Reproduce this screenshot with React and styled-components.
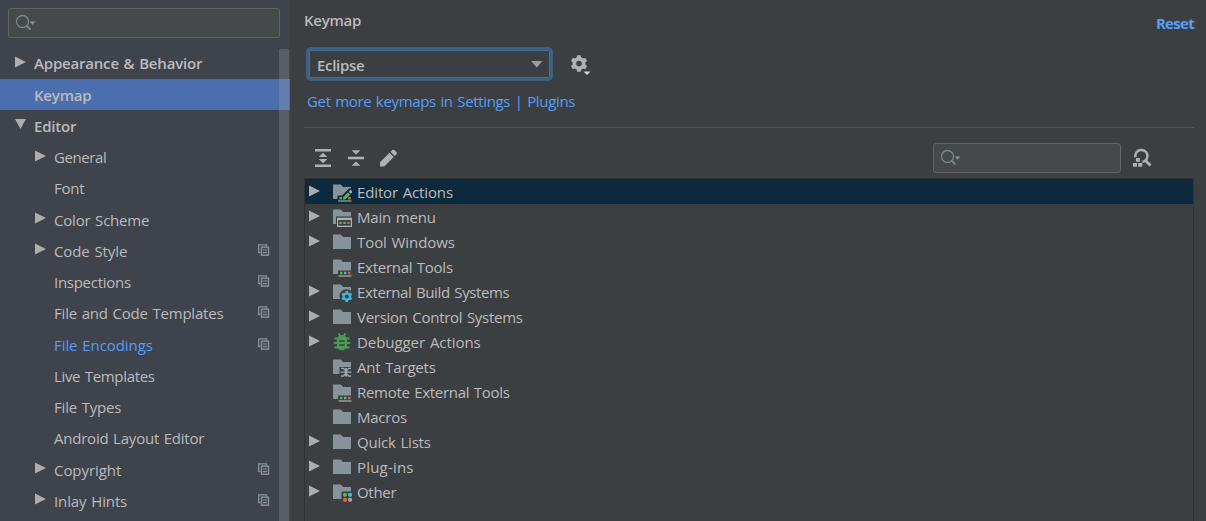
import React from 'react';
import styled, { createGlobalStyle } from 'styled-components';

const Global = createGlobalStyle`
  * { box-sizing: border-box; }
  body { margin: 0; background: #3c3f41; overflow: hidden; }
`;

const Window = styled.div`
  display: flex;
  width: 1206px;
  height: 521px;
  overflow: hidden;
  background: #3c3f41;
  color: #bbbbbb;
  font: 15px/25px "Open Sans", "Noto Sans", sans-serif;
  word-spacing: 1px;
`;

const Sidebar = styled.aside`
  position: relative;
  width: 290px;
  flex: none;
  background: #3f434c;
  padding-top: 8px;
`;

const SearchBox = styled.div`
  display: flex;
  align-items: center;
  width: ${(p) => p.$width}px;
  height: 30px;
  padding-left: 6px;
  border: 1px solid #646464;
  border-radius: 3px;
  background: #45494a;
`;

const SidebarSearch = styled.div`
  padding-left: 8px;
  margin-bottom: 9.75px;
`;

const NavRow = styled.div`
  display: flex;
  align-items: center;
  height: 31.25px;
  padding-left: ${(p) => (p.$nested ? 34 : 14)}px;
  padding-right: 20px;
  background: ${(p) => (p.$selected ? '#4b6eaf' : 'transparent')};
  color: ${(p) => (p.$changed ? '#589df6' : '#bbbbbb')};
  font-weight: ${(p) => (p.$nested ? 400 : 600)};
`;

const ArrowSlot = styled.span`
  display: flex;
  width: 20px;
  flex: none;
  padding-bottom: 3px;
`;

const Label = styled.span`
  flex: none;
  white-space: pre;
  padding-top: ${(p) => p.$drop || 0}px;
  letter-spacing: ${(p) => p.$track || 0}px;
`;

const RowEnd = styled.span`
  display: flex;
  margin-left: auto;
  padding-bottom: 2px;
`;

const Scrollbar = styled.div`
  position: absolute;
  top: 49px;
  right: 1px;
  bottom: 0;
  width: 10px;
  background: rgba(166, 166, 166, 0.27);
`;

const Main = styled.main`
  flex: 1;
  display: flex;
  flex-direction: column;
  padding: 8px 12px 0 14px;
`;

const Header = styled.header`
  display: flex;
  justify-content: space-between;
  height: 39px;
  font-weight: 600;
`;

const Reset = styled.a`
  padding-top: 3px;
  color: #589df6;
  font-weight: 700;
  letter-spacing: -0.7px;
`;

const SchemeRow = styled.div`
  display: flex;
  align-items: center;
  height: 34px;
  padding-left: 2px;
`;

const Select = styled.div`
  display: flex;
  align-items: center;
  justify-content: space-between;
  width: 247px;
  height: 34px;
  margin-right: 17px;
  padding: 0 7px 0 8px;
  border: 3px solid #3d6185;
  border-radius: 5px;
  box-shadow: inset 0 0 0 1px #466d94;
  font-weight: 600;
`;

const PluginLink = styled.a`
  height: 46px;
  padding: 8px 0 0 3px;
  color: #589df6;
`;

const Toolbar = styled.div`
  display: flex;
  align-items: center;
  height: 51px;
  padding: 10px 42px 0 9px;
  border-top: 1px solid #515355;
`;

const ToolGroup = styled.div`
  display: flex;
  gap: 13px;
  margin-right: auto;
  padding-bottom: 1px;
`;

const FindShortcut = styled.span`
  display: flex;
  margin-left: 11px;
  padding-bottom: 1px;
`;

const Tree = styled.div`
  flex: 1;
  border: 1px solid #323232;
  border-bottom: 0;
`;

const TreeRow = styled.div`
  display: flex;
  align-items: center;
  height: 25px;
  padding-left: 3px;
  background: ${(p) => (p.$selected ? '#0d293e' : 'transparent')};
`;

const TreeArrow = styled.span`
  display: flex;
  width: 24px;
  flex: none;
  padding-bottom: 2px;
`;

const TreeIcon = styled.span`
  display: flex;
  width: 25px;
  flex: none;
`;

const Arrow = ({ open }) => (
  <svg width="12" height="12" viewBox="0 0 12 12">
    <path d={open ? 'M1 1h11L6.5 11z' : 'M1 0.5v11L12 6z'} fill="#adadad" />
  </svg>
);

const SearchIcon = () => (
  <svg width="22" height="18" viewBox="0 0 22 18">
    <circle cx="7.5" cy="7.5" r="6" fill="none" stroke="#7b868c" strokeWidth="1.3" />
    <path d="M11.5 11.5l4 4" stroke="#7b868c" strokeWidth="1.9" />
    <path d="M14.500 7.500h6l-3 3.200z" fill="#87939a" />
  </svg>
);

const CopyIcon = () => (
  <svg width="12" height="12" viewBox="0 0 12 12" fill="none" stroke="#87939a">
    <path d="M2.500 8.500H.6V.8h7.900V2.500" strokeWidth="1.300" />
    <rect x="3.500" y="3.200" width="7" height="8" strokeWidth="1.400" />
    <path d="M5 6h4M5 8.600h4" strokeWidth="1.100" />
  </svg>
);

const gearPath = (cx, cy, r, inner, teeth) => {
  const pts = [];
  for (let i = 0; i < teeth; i += 1) {
    const a = (i * 2 * Math.PI) / teeth - Math.PI / 2;
    [[-0.34, inner], [-0.22, r], [0.22, r], [0.34, inner]].forEach(([d, q]) =>
      pts.push(`${(cx + q * Math.cos(a + d)).toFixed(2)} ${(cy + q * Math.sin(a + d)).toFixed(2)}`)
    );
  }
  return `M${pts.join('L')}z`;
};

const Gear = ({ cx, cy, r, inner, hole, color }) => (
  <path
    fillRule="evenodd"
    fill={color}
    d={`${gearPath(cx, cy, r, inner, 6)}M${cx - hole} ${cy}a${hole} ${hole} 0 1 0 ${hole * 2} 0a${hole} ${hole} 0 1 0 ${-hole * 2} 0z`}
  />
);

const SettingsIcon = () => (
  <svg width="22" height="22" viewBox="0 0 22 22">
    <Gear cx={9} cy={10.5} r={8.4} inner={6.5} hole={2.8} color="#afb1b3" />
    <path d="M13.500 18.500h7l-3.500 3.500z" fill="#d0d2d4" />
  </svg>
);

const ExpandIcon = () => (
  <svg width="20" height="20" viewBox="0 0 20 20" fill="#afb1b3">
    <path d="M2 1h16v2.500H2zM2 16.500h16V19H2zM10 4.700l4.300 4.300H5.700zM10 15.300l4.300-4.300H5.700z" />
  </svg>
);

const CollapseIcon = () => (
  <svg width="20" height="20" viewBox="0 0 20 20" fill="#afb1b3">
    <path d="M2 8.800h16v2.400H2zM5.600 2.200h8.800L10 6.500zM5.600 17.800h8.800L10 13.500z" />
  </svg>
);

const PencilIcon = () => (
  <svg width="20" height="20" viewBox="0 0 20 20" fill="#afb1b3">
    <path d="M1 18.500v-4.200L10.500 4.800l4.200 4.200-9.500 9.500zM11.500 3.800l1.900-1.900q.9-.8 1.800 0l2.400 2.400q.8.900 0 1.800L15.700 8z" />
  </svg>
);

const FindIcon = () => (
  <svg width="20" height="20" viewBox="0 0 20 20">
    <path d="M3.400 9.200A6.100 6.100 0 1 1 10.500 14" fill="none" stroke="#afb1b3" strokeWidth="2.500" />
    <path d="M13.300 12.200l5.200 5.200" stroke="#afb1b3" strokeWidth="2.800" />
    <path d="M4 10h3.800v3.700H4zM1 15h4v3.800H1zM6.200 15h4v3.800h-4z" fill="#afb1b3" />
  </svg>
);

const Dots = ({ y }) => (
  <>
    <rect x="8" y={y} width="2.400" height="2.400" fill="#62b543" />
    <rect x="12" y={y} width="2.400" height="2.400" fill="#40b6e0" />
    <rect x="16" y={y} width="2.400" height="2.400" fill="#f26522" />
  </>
);

const FOLDER = 'M1 2.500h7.800L11 5h8v12H1z';

const badges = {
  editor: {
    cut: 'M5.500 20v-6.500H10l7-7h3V20z',
    art: (
      <>
        <path d="M7.500 15h2.500v2.500H7.500zM11 17.500v-2.200l4.800-4.800 2.200 2.200-4.800 4.800z" fill="#62b543" />
        <path d="M16.600 9.700l2-2 1.400 1.300v1.500l-1.200 1.200z" fill="#9aa7b0" />
        <rect x="16.200" y="15" width="2.500" height="2.500" fill="#f26522" />
        <path d="M6 19h13.500" stroke="#9aa7b0" strokeWidth="1.200" />
      </>
    ),
  },
  menu: {
    cut: 'M4 9.500h16V20H4z',
    art: (
      <>
        <path d="M5 10.800h15V20H5zM6.200 13v5.800h12.600V13z" fill="#afb1b3" fillRule="evenodd" />
        <rect x="7.500" y="14.800" width="2.200" height="2.200" fill="#62b543" />
        <rect x="11.400" y="14.800" width="2.200" height="2.200" fill="#40b6e0" />
        <rect x="15.300" y="14.800" width="2.200" height="2.200" fill="#f26522" />
      </>
    ),
  },
  tools: {
    cut: 'M6 13.500h14V20H6z',
    art: (
      <>
        <Dots y={14.8} />
        <path d="M6.500 19h13" stroke="#afb1b3" strokeWidth="1.200" />
      </>
    ),
  },
  build: {
    cut: 'M7.500 14.500a7 7 0 0 1 12.500-4.500V20H9z',
    art: <Gear cx={14.8} cy={14.5} r={5.6} inner={4.2} hole={2} color="#40b6e0" />,
  },
  ant: {
    cut: 'M7.500 10H20V20H7.500z',
    art: (
      <>
        <path
          d="M9 11.300h2.500l1.500 2.200M19 11.300h-2.500L15 13.500M8.500 15.200h11M9 19h2.500l1.500-2.200M19 19h-2.500L15 16.800"
          stroke="#9aa7b0"
          strokeWidth="1.300"
          fill="none"
        />
        <path d="M14 11v8.500" stroke="#9aa7b0" strokeWidth="2.200" />
      </>
    ),
  },
  other: {
    cut: 'M9.500 9.500H20V20H9.500z',
    art: (
      <>
        <circle cx="13" cy="12.800" r="2.100" fill="#62b543" />
        <circle cx="18" cy="12.800" r="2.100" fill="#40b6e0" />
        <circle cx="13" cy="17.800" r="2.100" fill="#f26522" />
        <circle cx="18" cy="17.800" r="2.100" fill="#9aa7b0" />
      </>
    ),
  },
};

const FolderIcon = ({ badge, selected }) => (
  <svg width="20" height="20" viewBox="0 0 20 20">
    <path d={FOLDER} fill="#87939a" />
    {badge && (
      <>
        <path d={badges[badge].cut} fill={selected ? '#0d293e' : '#3c3f41'} />
        {badges[badge].art}
      </>
    )}
  </svg>
);

const BugIcon = () => (
  <svg width="20" height="20" viewBox="0 0 20 20">
    <path
      d="M6.500 1.500l2 3M13.500 1.500l-2 3M2.500 6.500h4M17.500 6.500h-4M1.800 11h16.400M2.500 15.500h4M17.500 15.500h-4"
      stroke="#499c54"
      strokeWidth="1.900"
    />
    <path d="M10 3c2.500 0 4 1.500 4.600 3.200.6 1.500.6 3 .6 5 0 4.300-2 7-5.200 7s-5.200-2.700-5.200-7c0-2 0-3.500.6-5C6 4.500 7.500 3 10 3z" fill="#499c54" />
    <path d="M7.300 9h5.400M7.300 13h5.400" stroke="#3c3f41" strokeWidth="1.400" />
  </svg>
);

const nav = [
  { text: 'Appearance & Behavior', arrow: true, track: -0.19 },
  { text: 'Keymap', selected: true, track: -0.2 },
  { text: 'Editor', arrow: true, open: true, track: -0.2 },
  { text: 'General', nested: true, arrow: true, track: -0.4 },
  { text: 'Font', nested: true, track: -0.25 },
  { text: 'Color Scheme', nested: true, arrow: true, track: -0.2 },
  { text: 'Code Style', nested: true, arrow: true, copy: true, track: -0.1 },
  { text: 'Inspections', nested: true, copy: true, track: -0.28 },
  { text: 'File and Code Templates', nested: true, copy: true, track: -0.2 },
  { text: 'File Encodings', nested: true, copy: true, changed: true, track: -0.07 },
  { text: 'Live Templates', nested: true, track: -0.33 },
  { text: 'File Types', nested: true, track: -0.2 },
  { text: 'Android Layout Editor', nested: true, track: -0.22 },
  { text: 'Copyright', nested: true, arrow: true, copy: true, track: -0.06 },
  { text: 'Inlay Hints', nested: true, arrow: true, copy: true, track: -0.12 },
];

const actions = [
  { text: 'Editor Actions', arrow: true, badge: 'editor', selected: true, track: -0.14 },
  { text: 'Main menu', arrow: true, badge: 'menu', track: -0.18 },
  { text: 'Tool Windows', arrow: true, track: -0.08 },
  { text: 'External Tools', badge: 'tools', track: -0.27 },
  { text: 'External Build Systems', arrow: true, badge: 'build', track: -0.37 },
  { text: 'Version Control Systems', arrow: true, track: -0.28 },
  { text: 'Debugger Actions', arrow: true, bug: true, track: -0.06 },
  { text: 'Ant Targets', badge: 'ant', track: -0.18 },
  { text: 'Remote External Tools', badge: 'tools', track: -0.3 },
  { text: 'Macros', track: -0.25 },
  { text: 'Quick Lists', arrow: true, track: -0.2 },
  { text: 'Plug-ins', arrow: true, track: 0.2 },
  { text: 'Other', arrow: true, badge: 'other', track: -0.3 },
];

export default function App() {
  return (
    <Window>
      <Global />
      <Sidebar>
        <SidebarSearch>
          <SearchBox $width={272}><SearchIcon /></SearchBox>
        </SidebarSearch>
        {nav.map((n) => (
          <NavRow key={n.text} $nested={n.nested} $selected={n.selected} $changed={n.changed}>
            <ArrowSlot>{n.arrow && <Arrow open={n.open} />}</ArrowSlot>
            <Label $track={n.track} $drop={1}>{n.text}</Label>
            {n.copy && <RowEnd><CopyIcon /></RowEnd>}
          </NavRow>
        ))}
        <Scrollbar />
      </Sidebar>
      <Main>
        <Header>
          <Label $track={-0.25}>Keymap</Label>
          <Reset>Reset</Reset>
        </Header>
        <SchemeRow>
          <Select>
            <Label $track={-0.3} $drop={2}>Eclipse</Label>
            <svg width="12" height="7" viewBox="0 0 12 7"><path d="M0 0h11.500L5.750 6.500z" fill="#9a9da0" /></svg>
          </Select>
          <SettingsIcon />
        </SchemeRow>
        <PluginLink><Label $track={-0.34}>Get more keymaps in Settings | Plugins</Label></PluginLink>
        <Toolbar>
          <ToolGroup><ExpandIcon /><CollapseIcon /><PencilIcon /></ToolGroup>
          <SearchBox $width={188}><SearchIcon /></SearchBox>
          <FindShortcut><FindIcon /></FindShortcut>
        </Toolbar>
        <Tree>
          {actions.map((a) => (
            <TreeRow key={a.text} $selected={a.selected}>
              <TreeArrow>{a.arrow && <Arrow />}</TreeArrow>
              <TreeIcon>{a.bug ? <BugIcon /> : <FolderIcon badge={a.badge} selected={a.selected} />}</TreeIcon>
              <Label $track={a.track} $drop={2}>{a.text}</Label>
            </TreeRow>
          ))}
        </Tree>
      </Main>
    </Window>
  );
}
